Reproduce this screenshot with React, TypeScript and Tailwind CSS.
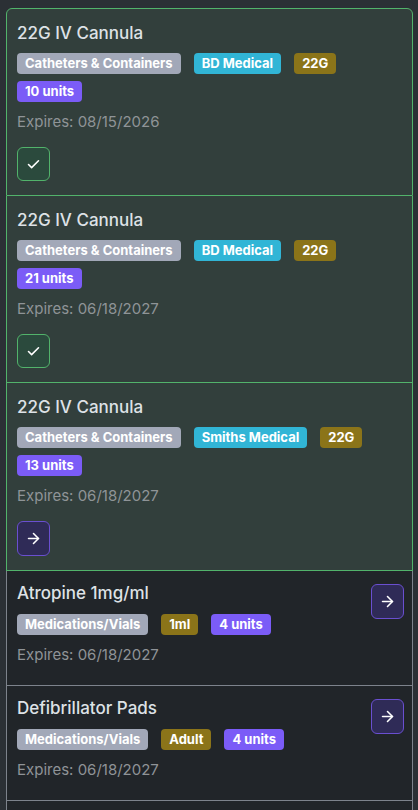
import React from 'react';
import { Check, ArrowRight } from 'lucide-react';

type Badge = { label: string; tone: 'gray' | 'cyan' | 'olive' | 'purple' };

type Item = {
  id: number;
  name: string;
  badges: Badge[];
  expires: string;
  state: 'done' | 'pending' | 'idle';
};

const ITEMS: Item[] = [
  {
    id: 1,
    name: '22G IV Cannula',
    badges: [
      { label: 'Catheters & Containers', tone: 'gray' },
      { label: 'BD Medical', tone: 'cyan' },
      { label: '22G', tone: 'olive' },
      { label: '10 units', tone: 'purple' },
    ],
    expires: '08/15/2026',
    state: 'done',
  },
  {
    id: 2,
    name: '22G IV Cannula',
    badges: [
      { label: 'Catheters & Containers', tone: 'gray' },
      { label: 'BD Medical', tone: 'cyan' },
      { label: '22G', tone: 'olive' },
      { label: '21 units', tone: 'purple' },
    ],
    expires: '06/18/2027',
    state: 'done',
  },
  {
    id: 3,
    name: '22G IV Cannula',
    badges: [
      { label: 'Catheters & Containers', tone: 'gray' },
      { label: 'Smiths Medical', tone: 'cyan' },
      { label: '22G', tone: 'olive' },
      { label: '13 units', tone: 'purple' },
    ],
    expires: '06/18/2027',
    state: 'pending',
  },
  {
    id: 4,
    name: 'Atropine 1mg/ml',
    badges: [
      { label: 'Medications/Vials', tone: 'gray' },
      { label: '1ml', tone: 'olive' },
      { label: '4 units', tone: 'purple' },
    ],
    expires: '06/18/2027',
    state: 'idle',
  },
  {
    id: 5,
    name: 'Defibrillator Pads',
    badges: [
      { label: 'Medications/Vials', tone: 'gray' },
      { label: 'Adult', tone: 'olive' },
      { label: '4 units', tone: 'purple' },
    ],
    expires: '06/18/2027',
    state: 'idle',
  },
];

const TONES: Record<Badge['tone'], string> = {
  gray: 'bg-[#a2a8b8]',
  cyan: 'bg-[#31b5d6]',
  olive: 'bg-[#8b7419]',
  purple: 'bg-[#7b5cf7]',
};

function Tag({ badge }: { badge: Badge }) {
  return (
    <span
      className={`${TONES[badge.tone]} inline-flex h-[21px] items-center rounded-[4px] px-[8px] text-[13px] font-bold leading-none text-white`}
    >
      {badge.label}
    </span>
  );
}

function ArrowButton() {
  return (
    <button className="flex h-[35px] w-[33px] shrink-0 items-center justify-center rounded-[6px] border border-[#6a4fd0] bg-[#2f2b57] text-white">
      <ArrowRight className="h-[17px] w-[17px]" strokeWidth={2.25} />
    </button>
  );
}

function CheckButton() {
  return (
    <button className="flex h-[34px] w-[33px] items-center justify-center rounded-[6px] border border-[#52b36b] bg-[#2b4a3d] text-white">
      <Check className="h-[15px] w-[15px]" strokeWidth={2.5} />
    </button>
  );
}

function Tags({ badges }: { badges: Badge[] }) {
  return (
    <div className="flex flex-wrap gap-x-[13px] gap-y-[7px]">
      {badges.map((b) => (
        <Tag key={b.label} badge={b} />
      ))}
    </div>
  );
}

function ListItem({ item, first }: { item: Item; first: boolean }) {
  const stocked = item.state !== 'idle';

  if (stocked) {
    return (
      <div
        className={`border border-[#52b36b] bg-[#323f3c] px-[10px] pb-[14px] pt-[13px] ${first ? 'rounded-t-[6px]' : 'border-t-0'}`}
      >
        <h5 className="mb-[9px] text-[17px] leading-[22px] font-medium text-[#dee2e6]">{item.name}</h5>
        <Tags badges={item.badges} />
        <p className="mt-[8px] text-[15px] leading-[24px] text-[#8f9497]">Expires: {item.expires}</p>
        <div className="mt-[13px]">{item.state === 'done' ? <CheckButton /> : <ArrowButton />}</div>
      </div>
    );
  }

  return (
    <div className="flex items-start justify-between border border-t-0 border-[#7d838c] bg-[#212529] pb-[18px] pl-[10px] pr-[8px] pt-[11px]">
      <div>
        <h5 className="mb-[10px] text-[17px] leading-[22px] font-medium text-[#dee2e6]">{item.name}</h5>
        <Tags badges={item.badges} />
        <p className="mt-[8px] text-[15px] leading-[24px] text-[#8f9397]">Expires: {item.expires}</p>
      </div>
      <div className="pt-[2px]">
        <ArrowButton />
      </div>
    </div>
  );
}

export default function App() {
  return (
    <div
      className="min-h-screen bg-[#2b3035] pl-[6px] pr-[5px] pt-[8px]"
      style={{ fontFamily: 'Inter, "Noto Sans", sans-serif' }}
    >
      <div className="flex flex-col">
        {ITEMS.map((item, i) => (
          <ListItem key={item.id} item={item} first={i === 0} />
        ))}
        <div className="h-[40px] border border-t-0 border-[#7d838c] bg-[#212529]" />
      </div>
    </div>
  );
}
